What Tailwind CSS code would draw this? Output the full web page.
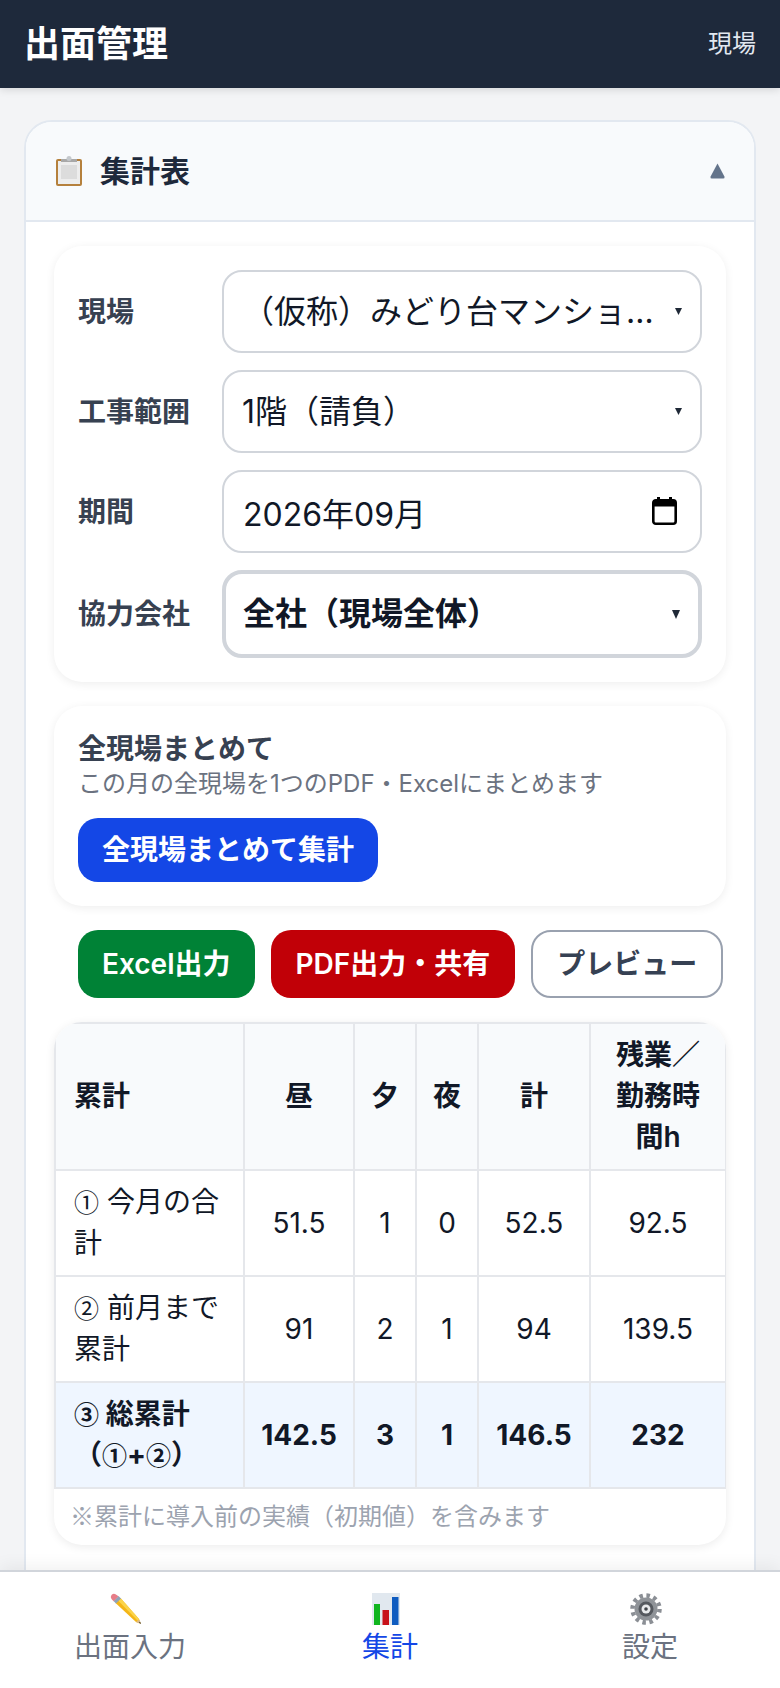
<!DOCTYPE html>
<html lang="ja">
<head>
  <meta charset="UTF-8">
  <meta name="viewport" content="width=device-width, initial-scale=1.0">
  <title>出面管理</title>
  <script src="https://cdn.jsdelivr.net/npm/@tailwindcss/browser@4"></script>
</head>
<body class="bg-[#f3f4f6] text-[#111827] font-['Inter','Noto_Sans_CJK_JP',sans-serif]">
  <div class="h-[1688px] flex flex-col overflow-hidden">
    <!-- ヘッダー -->
    <header class="relative z-10 h-[88px] shrink-0 bg-[#1e293b] text-white flex items-center justify-between px-6 shadow-[0_2px_8px_rgba(0,0,0,0.12)]">
      <h1 class="text-[36px] font-bold">出面管理</h1>
      <span class="text-[24px] text-[#e2e8f0]">現場</span>
    </header>

    <main class="flex-1 min-h-0 overflow-hidden px-6 pt-8">
      <section class="bg-white border-2 border-[#e2e8f0] rounded-[28px] overflow-hidden">
        <div class="h-[100px] bg-[#f8fafc] border-b-2 border-[#e2e8f0] flex items-center justify-between pl-[30px] pr-[29px]">
          <div class="flex items-center gap-[18px]">
            <svg width="26" height="30" viewBox="0 0 26 30">
              <rect x="0" y="3" width="26" height="27" rx="2" fill="#b5803c"/>
              <rect x="2" y="5" width="22" height="23" fill="#ededed"/>
              <rect x="5" y="9" width="16" height="14" fill="#dcdcdc"/>
              <rect x="5" y="3" width="16" height="3" fill="#a8a8a8"/>
              <circle cx="13" cy="2.5" r="2.5" fill="#c4c8cc"/>
            </svg>
            <h2 class="text-[30px] font-bold text-[#1e293b]">集計表</h2>
          </div>
          <svg width="15" height="16" viewBox="0 0 16 16"><path d="M8 0 L15.5 14 Q15.8 16 14 16 L2 16 Q0.2 16 0.5 14 Z" fill="#64748b"/></svg>
        </div>

        <div class="px-7 pt-6 pb-[60px] flex flex-col gap-6">
          <!-- 条件 -->
          <div class="bg-white rounded-[28px] p-6 shadow-[0_2px_10px_rgba(0,0,0,0.07)] flex flex-col gap-[17px]">
            <div class="flex items-center">
              <label class="w-[144px] shrink-0 text-[28px] font-semibold text-[#374151]">現場</label>
              <div class="relative flex-1 min-w-0">
                <select class="appearance-none w-full h-[83px] bg-white border-2 border-[#d1d5db] rounded-[20px] pl-[18px] pr-[46px] text-[32px] text-[#111827] truncate">
                  <option>（仮称）みどり台マンション新築工事</option>
                </select>
                <svg class="absolute right-[20px] top-[38px]" width="7" height="7" viewBox="0 0 7 7"><path d="M0 0H7L3.5 7Z" fill="#1f2937"/></svg>
              </div>
            </div>
            <div class="flex items-center">
              <label class="w-[144px] shrink-0 text-[28px] font-semibold text-[#374151]">工事範囲</label>
              <div class="relative flex-1 min-w-0">
                <select class="appearance-none w-full h-[83px] bg-white border-2 border-[#d1d5db] rounded-[20px] pl-[18px] pr-[46px] text-[32px] text-[#111827]">
                  <option>1階（請負）</option>
                </select>
                <svg class="absolute right-[20px] top-[38px]" width="7" height="7" viewBox="0 0 7 7"><path d="M0 0H7L3.5 7Z" fill="#1f2937"/></svg>
              </div>
            </div>
            <div class="flex items-center">
              <label class="w-[144px] shrink-0 text-[28px] font-semibold text-[#374151]">期間</label>
              <div class="relative flex-1 min-w-0">
                <input type="text" value="2026年09月" class="w-full h-[83px] bg-white border-2 border-[#d1d5db] rounded-[20px] pl-[19px] pr-[60px] text-[32px] text-[#111827]">
                <svg class="absolute right-[25px] top-[27px]" width="25" height="28" viewBox="0 0 25 28">
                  <path d="M5 0h3v4H5zM17 0h3v4h-3z" fill="#000"/>
                  <rect x="1.3" y="3.3" width="22.4" height="23.4" rx="2.5" fill="none" stroke="#000" stroke-width="2.6"/>
                  <rect x="1" y="3" width="23" height="6.5" fill="#000"/>
                </svg>
              </div>
            </div>
            <div class="flex items-center">
              <label class="w-[144px] shrink-0 text-[28px] font-semibold text-[#374151]">協力会社</label>
              <div class="relative flex-1 min-w-0">
                <select class="appearance-none w-full h-[88px] bg-white border-4 border-[#d1d5db] rounded-[20px] pl-[17px] pr-[46px] text-[32px] font-bold text-[#111827]">
                  <option>全社（現場全体）</option>
                </select>
                <svg class="absolute right-[22px] top-[40px]" width="8" height="9" viewBox="0 0 8 9"><path d="M0 0H8L4 9Z" fill="#1f2937"/></svg>
              </div>
            </div>
          </div>

          <!-- 全現場まとめて -->
          <div class="bg-white rounded-[28px] p-6 shadow-[0_2px_10px_rgba(0,0,0,0.07)]">
            <div class="text-[28px] leading-[38px] font-semibold text-[#374151]">全現場まとめて</div>
            <p class="text-[24px] leading-[32px] text-[#6b7280] mb-[18px]">この月の全現場を1つのPDF・Excelにまとめます</p>
            <button class="h-16 px-6 rounded-[20px] bg-[#1447e6] text-white text-[28px] font-semibold">全現場まとめて集計</button>
          </div>

          <!-- 出力 -->
          <div class="flex gap-4 px-6">
            <button class="h-[68px] px-6 shrink-0 whitespace-nowrap rounded-[20px] bg-[#008236] text-white text-[28px] font-semibold">Excel出力</button>
            <button class="h-[68px] px-[25px] shrink-0 whitespace-nowrap rounded-[20px] bg-[#c10007] text-white text-[28px] font-semibold">PDF出力・共有</button>
            <button class="h-[68px] px-6 shrink-0 whitespace-nowrap rounded-[20px] bg-white border-2 border-[#99a1af] text-[#364153] text-[28px] font-semibold">プレビュー</button>
          </div>

          <!-- 累計 -->
          <div class="bg-white rounded-[28px] overflow-hidden shadow-[0_2px_10px_rgba(0,0,0,0.08)]">
            <table class="w-[671px] table-fixed border-collapse text-[28px] leading-[41px]">
              <colgroup>
                <col class="w-[189px]"><col class="w-[110px]"><col class="w-[62px]"><col class="w-[62px]"><col class="w-[112px]"><col class="w-[136px]">
              </colgroup>
              <thead>
                <tr class="bg-[#f8fafc] font-semibold">
                  <th class="border-2 border-[#e5e7eb] py-[11px] pl-[18px] pr-2 text-left font-semibold">累計</th>
                  <th class="border-2 border-[#e5e7eb] py-[11px] font-semibold">昼</th>
                  <th class="border-2 border-[#e5e7eb] py-[11px] font-semibold">夕</th>
                  <th class="border-2 border-[#e5e7eb] py-[11px] font-semibold">夜</th>
                  <th class="border-2 border-[#e5e7eb] py-[11px] font-semibold">計</th>
                  <th class="border-2 border-[#e5e7eb] py-[11px] px-4 font-semibold">残業／勤務時間h</th>
                </tr>
              </thead>
              <tbody class="text-center">
                <tr>
                  <td class="border-2 border-[#e5e7eb] py-[11px] pl-[18px] pr-[10px] text-left"><span class="font-['Noto_Sans_CJK_JP'] text-[25px] leading-none">①</span> 今月の合計</td>
                  <td class="border-2 border-[#e5e7eb] py-[11px]">51.5</td>
                  <td class="border-2 border-[#e5e7eb] py-[11px]">1</td>
                  <td class="border-2 border-[#e5e7eb] py-[11px]">0</td>
                  <td class="border-2 border-[#e5e7eb] py-[11px]">52.5</td>
                  <td class="border-2 border-[#e5e7eb] py-[11px]">92.5</td>
                </tr>
                <tr>
                  <td class="border-2 border-[#e5e7eb] py-[11px] pl-[18px] pr-[10px] text-left"><span class="font-['Noto_Sans_CJK_JP'] text-[25px] leading-none">②</span> 前月まで累計</td>
                  <td class="border-2 border-[#e5e7eb] py-[11px]">91</td>
                  <td class="border-2 border-[#e5e7eb] py-[11px]">2</td>
                  <td class="border-2 border-[#e5e7eb] py-[11px]">1</td>
                  <td class="border-2 border-[#e5e7eb] py-[11px]">94</td>
                  <td class="border-2 border-[#e5e7eb] py-[11px]">139.5</td>
                </tr>
                <tr class="bg-[#eff6ff] font-bold">
                  <td class="border-2 border-[#e5e7eb] py-[11px] pl-[18px] pr-[10px] text-left"><span class="font-['Noto_Sans_CJK_JP'] text-[25px] leading-none">③</span> 総累計（<span class="font-['Noto_Sans_CJK_JP'] text-[25px] leading-none">①</span>+<span class="font-['Noto_Sans_CJK_JP'] text-[25px] leading-none">②</span>）</td>
                  <td class="border-2 border-[#e5e7eb] py-[11px]">142.5</td>
                  <td class="border-2 border-[#e5e7eb] py-[11px]">3</td>
                  <td class="border-2 border-[#e5e7eb] py-[11px]">1</td>
                  <td class="border-2 border-[#e5e7eb] py-[11px]">146.5</td>
                  <td class="border-2 border-[#e5e7eb] py-[11px]">232</td>
                </tr>
              </tbody>
            </table>
            <p class="px-4 py-[10px] text-[24px] leading-[36px] text-[#9ca3af]"><span class="font-['Noto_Sans_CJK_JP'] leading-none">※</span>累計に導入前の実績（初期値）を含みます</p>
          </div>
        </div>
      </section>
    </main>

    <!-- ナビ -->
    <nav class="relative z-10 h-[118px] shrink-0 bg-white border-t-2 border-[#d1d5db] grid grid-cols-3 shadow-[0_-4px_16px_rgba(0,0,0,0.06)]">
      <a class="flex flex-col items-center pt-[21px] text-[#6b7280]">
        <svg class="mr-2" width="32" height="32" viewBox="0 0 32 32">
          <path d="M5.5 10 L10.5 5 L29 26 L31 31 L26 29 Z" fill="#f4b617"/>
          <path d="M8 7.5 L10.5 5 L29 26 L28 28 Z" fill="#fbd44a"/>
          <path d="M26 29 L29.3 26.5 L31 31 Z" fill="#d9b98c"/>
          <path d="M29 29.5 L30 28.8 L31 31 Z" fill="#1f2937"/>
          <path d="M3.5 8 L8.5 3 L11 5.5 L6 10.5 Z" fill="#8fa3b8"/>
          <path d="M1.5 6 Q0 4 1.5 2 Q3.5 0 5.5 1.2 L8.5 3.2 L3.6 8.2 Z" fill="#e77d88"/>
        </svg>
        <span class="text-[28px] leading-[40px] mt-[2px]">出面入力</span>
      </a>
      <a class="flex flex-col items-center pt-[21px] text-[#1447e6]">
        <svg class="mr-2" width="28" height="32" viewBox="0 0 28 32">
          <rect width="28" height="32" fill="#e1e8ef"/>
          <rect x="2" y="11" width="6" height="21" fill="#10b51f"/>
          <rect x="10.500" y="17" width="6.500" height="15" fill="#c8111a"/>
          <rect x="20" y="4" width="6.500" height="28" fill="#0f5cc0"/>
        </svg>
        <span class="text-[28px] leading-[40px] mt-[2px]">集計</span>
      </a>
      <a class="flex flex-col items-center pt-[21px] text-[#6b7280]">
        <svg class="mr-2" width="32" height="32" viewBox="0 0 32 32">
          <circle cx="16" cy="16" r="13.500" fill="none" stroke="#8b8f95" stroke-width="4.500" stroke-dasharray="3.500 3.570"/>
          <circle cx="16" cy="16" r="11.500" fill="#8f9398"/>
          <circle cx="16" cy="16" r="7.500" fill="#55595f"/>
          <circle cx="16" cy="16" r="4.500" fill="#e8eaec"/>
          <circle cx="16" cy="16" r="1.800" fill="#3f4348"/>
        </svg>
        <span class="text-[28px] leading-[40px] mt-[2px]">設定</span>
      </a>
    </nav>
  </div>
</body>
</html>
